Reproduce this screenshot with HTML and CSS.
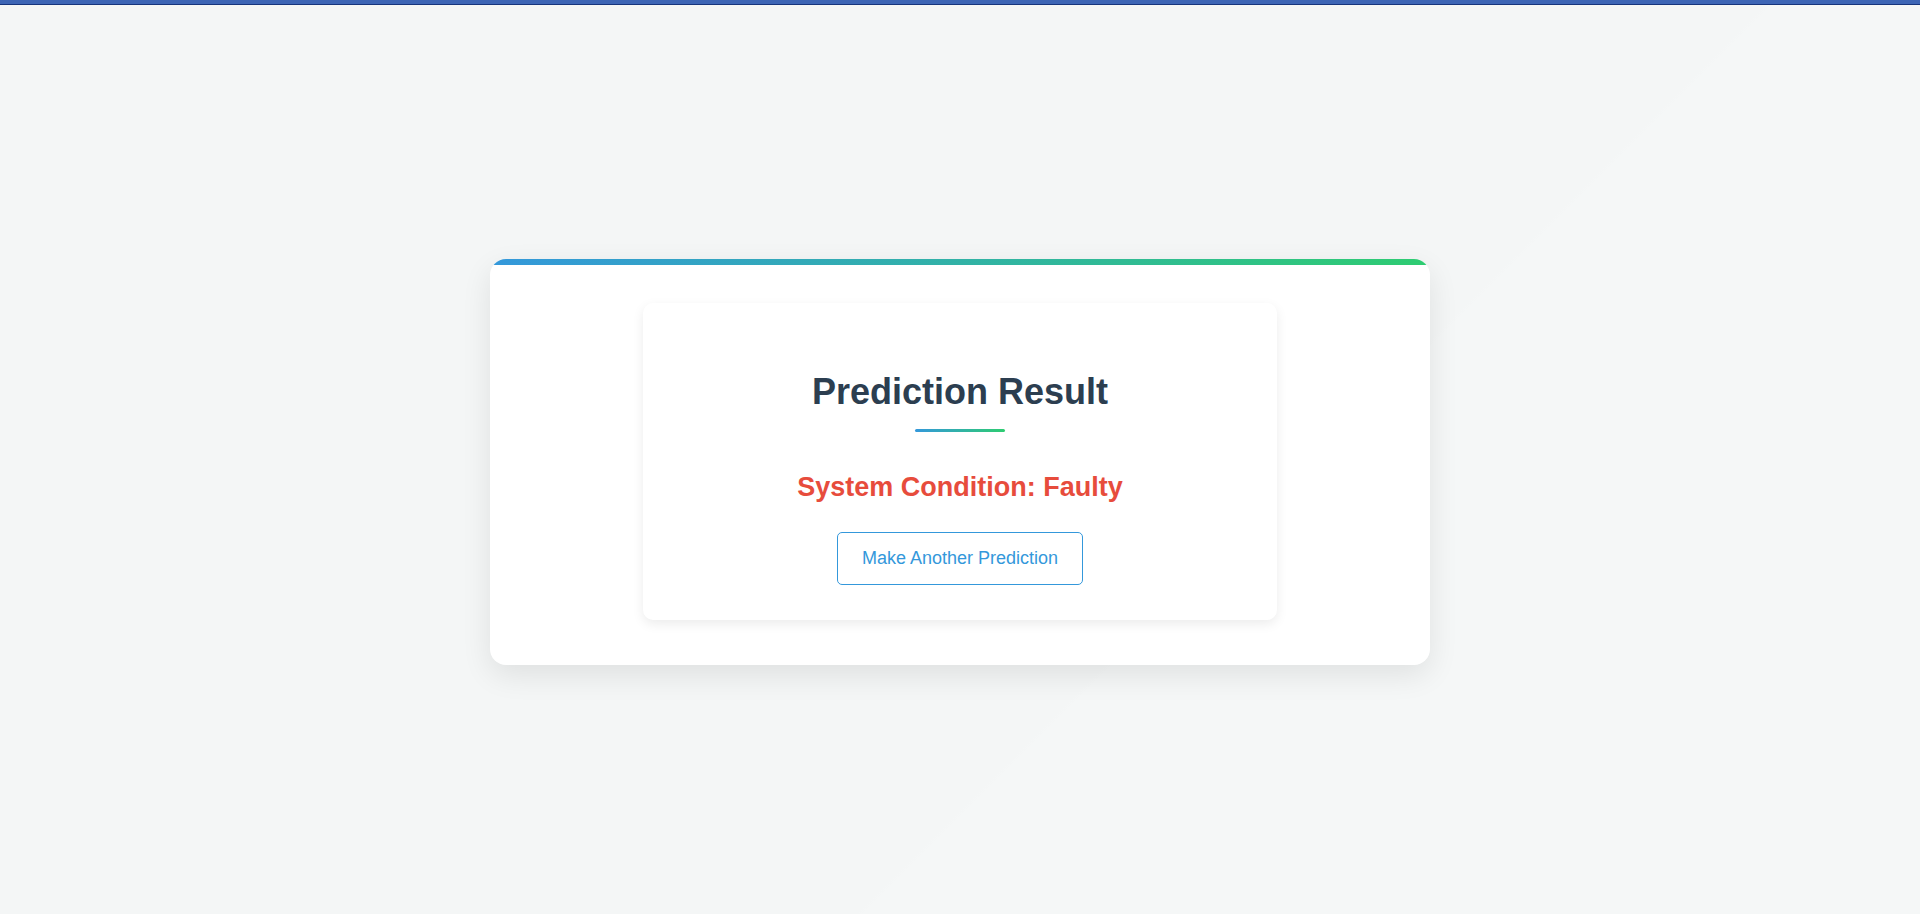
FILE: index.html
```html
<!DOCTYPE html>
<html lang="en">
<head>
<meta charset="utf-8">
<title>Prediction Result</title>
<link rel="stylesheet" href="styles.css">
</head>
<body>
<div class="topbar"></div>
<main class="page">
  <section class="card">
    <div class="card-accent"></div>
    <div class="card-body">
      <div class="result">
        <h1 class="result-title">Prediction Result</h1>
        <div class="result-rule"></div>
        <h2 class="result-status">System Condition: Faulty</h2>
        <a class="result-button" href="#">Make Another Prediction</a>
      </div>
    </div>
  </section>
</main>
</body>
</html>
```
FILE: styles.css
```css
html, body {
  margin: 0;
  padding: 0;
}
body {
  font-family: "Liberation Sans", Arial, sans-serif;
  background: linear-gradient(135deg, #f4f6f6 0%, #f4f6f6 62.5%, #f5f7f7 62.7%, #f5f7f7 100%);
  min-height: 914px;
  display: flex;
  flex-direction: column;
}
.topbar {
  height: 4px;
  background: #3d65b5;
  border-bottom: 1px solid #16347c;
}
.page {
  flex: 1;
  display: flex;
  justify-content: center;
  align-items: flex-start;
  padding-top: 254px;
}
.card {
  width: 940px;
  background: #fff;
  border-radius: 16px;
  overflow: hidden;
  box-shadow: 0 10px 30px rgba(0, 0, 0, 0.09);
}
.card-accent {
  height: 6px;
  background: linear-gradient(90deg, #3498db, #2ecc71);
}
.card-body {
  display: flex;
  justify-content: center;
  padding: 38px 0 45px;
}
.result {
  width: 634px;
  background: #fff;
  border-radius: 10px;
  box-shadow: 0 4px 12px rgba(0, 0, 0, 0.08);
  display: flex;
  flex-direction: column;
  align-items: center;
  padding: 66px 0 35px;
  box-sizing: border-box;
}
.result-title {
  margin: 0;
  font-size: 36px;
  line-height: 46px;
  font-weight: 700;
  color: #2c3e50;
}
.result-rule {
  margin-top: 14px;
  width: 90px;
  height: 3px;
  border-radius: 2px;
  background: linear-gradient(90deg, #3498db, #2ecc71);
}
.result-status {
  margin: 40px 0 0;
  font-size: 27px;
  line-height: 30px;
  font-weight: 700;
  color: #e74c3c;
}
.result-button {
  margin-top: 30px;
  display: inline-block;
  padding: 15px 24px;
  font-size: 18px;
  line-height: 21px;
  color: #3498db;
  border: 1px solid #3498db;
  border-radius: 5px;
  text-decoration: none;
}
```
